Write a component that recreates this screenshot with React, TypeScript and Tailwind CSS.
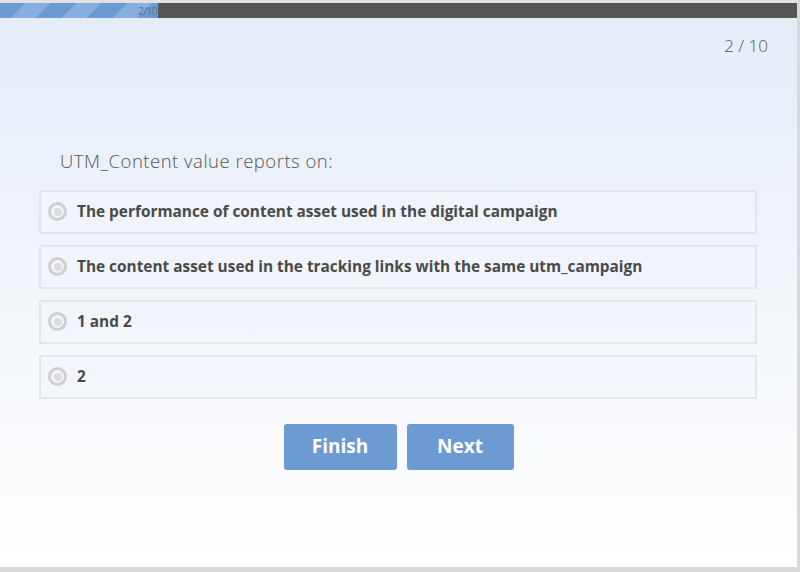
export default function App() {
  const options = [
    "The performance of content asset used in the digital campaign",
    "The content asset used in the tracking links with the same utm_campaign",
    "1 and 2",
    "2",
  ];

  return (
    <div className="w-[800px] h-[572px] bg-[#d9d9d9] overflow-hidden font-['Open_Sans',sans-serif]">
      <div className="w-[797px] h-[567px] bg-gradient-to-b from-[#e4ecf7] to-white flex flex-col border-t-[3px] border-[#e2e2e2]">
        {/* Progress bar */}
        <div className="h-[15px] bg-[#555555] flex">
          <div className="w-[158px] h-full bg-[repeating-linear-gradient(135deg,#6b9bd2_0px,#6b9bd2_18px,#86afe0_18px,#86afe0_36px)] flex items-center justify-end pr-px">
            <span className="text-[10px] leading-none text-[#5a6b80] tracking-tighter whitespace-nowrap">2/10</span>
          </div>
        </div>

        {/* Counter */}
        <div className="flex justify-end pr-[29px] pt-[15px]">
          <span className="text-[17px] text-[#555] font-light">2 / 10</span>
        </div>

        {/* Question */}
        <div className="px-[39px] pt-[88px]">
          <p className="pl-[21px] text-[18.5px] leading-[28px] tracking-[0.5px] text-[#555] font-light mb-[15px]">
            UTM_Content value reports on:
          </p>
          <div className="flex flex-col gap-[11px] w-[718px]">
            {options.map((o) => (
              <label
                key={o}
                className="h-[44px] border-2 border-[#e3e5e8] bg-[#f1f5fb]/60 flex items-center pl-[7px] gap-[10px]"
              >
                <span className="w-[19px] h-[19px] rounded-full border-[3px] border-[#cfcfcf] flex items-center justify-center">
                  <span className="w-[8px] h-[8px] rounded-full bg-[#dcdcdc]" />
                </span>
                <span className="text-[15.4px] font-bold text-[#4a4a4a]">{o}</span>
              </label>
            ))}
          </div>
        </div>

        {/* Buttons */}
        <div className="flex justify-center gap-[10px] pt-[25px]">
          <button className="w-[113px] h-[46px] rounded-[3px] bg-[#6b9bd2] text-white font-bold text-[19px]">Finish</button>
          <button className="w-[107px] h-[46px] rounded-[3px] bg-[#6b9bd2] text-white font-bold text-[19px]">Next</button>
        </div>
      </div>
    </div>
  );
}
